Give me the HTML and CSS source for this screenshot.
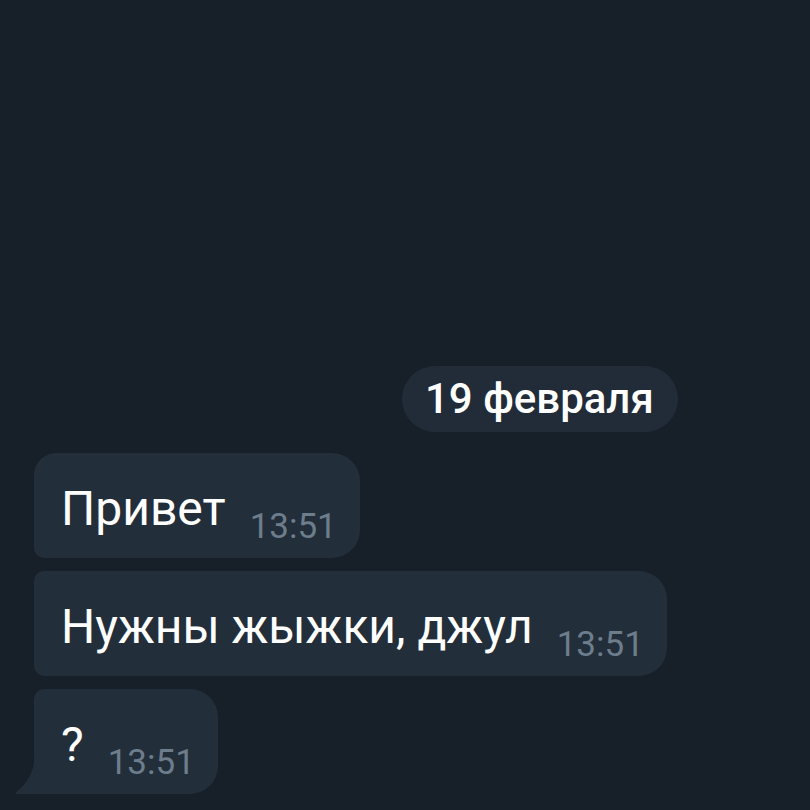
FILE: index.html
```html
<!DOCTYPE html>
<html lang="ru">
<head>
    <meta charset="UTF-8">
    <meta name="viewport" content="width=device-width, initial-scale=1.0">
    <title>Чат</title>
    <link rel="stylesheet" href="styles.css">
</head>
<body>
    <div class="chat">
        <!-- Date separator -->
        <div class="date-pill">19 февраля</div>

        <!-- Incoming message group -->
        <div class="group">
            <div class="bubble first">
                <span class="text">Привет</span>
                <span class="time">13:51</span>
            </div>
            <div class="bubble">
                <span class="text">Нужны жыжки, джул</span>
                <span class="time">13:51</span>
            </div>
            <div class="bubble last">
                <span class="text">?</span>
                <span class="time">13:51</span>
                <svg class="tail" width="20" height="36" viewBox="0 0 20 36">
                    <path d="M20 0 L20 36 L2 36 C0.5 36 0 35 1.2 34 C9 28 17 20 20 0 Z" fill="#232e3b"/>
                </svg>
            </div>
        </div>
    </div>
</body>
</html>
```

FILE: styles.css
```css
/* Page */
body {
    margin: 0;
    height: 100vh;
    background-color: #171f29;
    font-family: 'Roboto', 'Noto Sans', sans-serif;
    color: #ffffff;
    overflow: hidden;
}

/* Chat column, pinned to the bottom */
.chat {
    height: 100%;
    display: flex;
    flex-direction: column;
    justify-content: flex-end;
    align-items: flex-start;
    padding: 0 0 16px 34px;
    box-sizing: border-box;
}

/* Date separator */
.date-pill {
    margin-left: 368px;
    margin-bottom: 21px;
    height: 66px;
    padding: 0 24px 0 23px;
    border-radius: 33px;
    background-color: #222c39;
    font-size: 42px;
    font-weight: 500;
    line-height: 66px;
}

/* Message group */
.group {
    display: flex;
    flex-direction: column;
    align-items: flex-start;
    gap: 13px;
}

.bubble {
    position: relative;
    display: flex;
    align-items: flex-end;
    padding: 28px 23px 10px 27px;
    background-color: #232e3b;
    border-radius: 10px 28px 28px 10px;
}

.bubble.first {
    border-top-left-radius: 22px;
}

.bubble.last {
    border-bottom-left-radius: 0;
}

.text {
    font-size: 48px;
    line-height: 56px;
    margin-bottom: 11px;
    margin-right: 24px;
}

.time {
    font-size: 35px;
    line-height: 42px;
    color: #6d7d8c;
}

/* Tail of the last bubble */
.tail {
    position: absolute;
    left: -19px;
    bottom: 0;
}
```
